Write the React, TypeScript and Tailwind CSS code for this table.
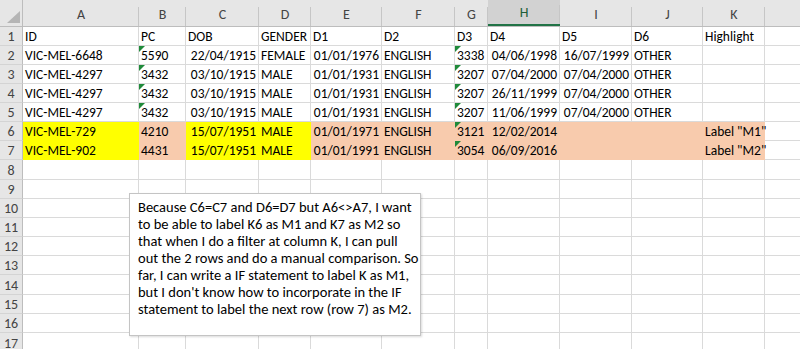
import React from 'react';

type Cell = { v?: string; right?: boolean; tri?: boolean; fill?: 'y' | 'p' };

const COLS = [
  { key: 'A', w: 'w-[116px]' },
  { key: 'B', w: 'w-[47px]' },
  { key: 'C', w: 'w-[73px]' },
  { key: 'D', w: 'w-[52px]' },
  { key: 'E', w: 'w-[71px]' },
  { key: 'F', w: 'w-[73px]' },
  { key: 'G', w: 'w-[33px]' },
  { key: 'H', w: 'w-[72px]' },
  { key: 'I', w: 'w-[72px]' },
  { key: 'J', w: 'w-[71px]' },
  { key: 'K', w: 'w-[62px]' },
  { key: 'L', w: 'w-[100px]' },
];

const t = (v: string, tri = false): Cell => ({ v, tri });
const d = (v: string): Cell => ({ v, right: true });

const ROWS: Cell[][] = [
  [t('ID'), t('PC'), t('DOB'), t('GENDER'), t('D1'), t('D2'), t('D3'), t('D4'), t('D5'), t('D6'), t('Highlight'), {}],
  [t('VIC-MEL-6648'), t('5590', true), d('22/04/1915'), t('FEMALE'), d('01/01/1976'), t('ENGLISH'), t('3338', true), d('04/06/1998'), d('16/07/1999'), t('OTHER'), {}, {}],
  [t('VIC-MEL-4297'), t('3432', true), d('03/10/1915'), t('MALE'), d('01/01/1931'), t('ENGLISH'), t('3207', true), d('07/04/2000'), d('07/04/2000'), t('OTHER'), {}, {}],
  [t('VIC-MEL-4297'), t('3432', true), d('03/10/1915'), t('MALE'), d('01/01/1931'), t('ENGLISH'), t('3207', true), d('26/11/1999'), d('07/04/2000'), t('OTHER'), {}, {}],
  [t('VIC-MEL-4297'), t('3432', true), d('03/10/1915'), t('MALE'), d('01/01/1931'), t('ENGLISH'), t('3207', true), d('11/06/1999'), d('07/04/2000'), t('OTHER'), {}, {}],
  [
    { v: 'VIC-MEL-729', fill: 'y' }, { v: '4210', fill: 'p' }, { v: '15/07/1951', right: true, fill: 'y' }, { v: 'MALE', fill: 'y' },
    { v: '01/01/1971', right: true, fill: 'p' }, { v: 'ENGLISH', fill: 'p' }, { v: '3121', tri: true, fill: 'p' },
    { v: '12/02/2014', right: true, fill: 'p' }, { fill: 'p' }, { fill: 'p' }, { v: 'Label "M1"', fill: 'p' }, {},
  ],
  [
    { v: 'VIC-MEL-902', fill: 'y' }, { v: '4431', fill: 'p' }, { v: '15/07/1951', right: true, fill: 'y' }, { v: 'MALE', fill: 'y' },
    { v: '01/01/1991', right: true, fill: 'p' }, { v: 'ENGLISH', fill: 'p' }, { v: '3054', tri: true, fill: 'p' },
    { v: '06/09/2016', right: true, fill: 'p' }, { fill: 'p' }, { fill: 'p' }, { v: 'Label "M2"', fill: 'p' }, {},
  ],
];

// row heights measured from the screenshot (rows 1..17)
const HEIGHTS = [19, 19, 19, 19, 19, 19, 19, 20, 19, 19, 19, 19, 19, 20, 19, 19, 20];

const NOTE = [
  'Because C6=C7 and D6=D7 but A6<>A7, I want',
  'to be able to label K6 as M1 and K7 as M2 so',
  'that when I do a filter at column K, I can pull',
  'out the 2 rows and do a manual comparison. So',
  'far, I can write a IF statement to label K as M1,',
  "but I don't know how to incorporate in the IF",
  'statement to label the next row (row 7) as M2.',
];

const fillClass = (c: Cell) => {
  if (c.fill === 'y') return 'bg-[#ffff00] border-[#ffff00]';
  if (c.fill === 'p') return 'bg-[#f8cbad] border-[#f8cbad]';
  return 'border-[#dadada]';
};

const GridCell = ({ cell, w }: { cell: Cell; w: string }) => (
  <div
    className={`relative flex shrink-0 items-end border-r border-b px-[2px] ${w} ${fillClass(cell)} ${
      cell.right ? 'justify-end' : 'justify-start'
    }`}
  >
    {cell.tri && (
      <svg className="absolute left-0 top-0" width="6" height="6" viewBox="0 0 6 6">
        <polygon points="0,0 6,0 0,6" fill="#1f8a3a" />
      </svg>
    )}
    {cell.v && <span className="relative z-10 whitespace-nowrap leading-[17px]">{cell.v}</span>}
  </div>
);

export default function App() {
  return (
    <div className="relative h-[349px] w-[800px] overflow-hidden bg-white font-['Calibri','Carlito','Lato','Liberation_Sans',sans-serif] text-[13.5px] text-black">
      {/* column headers */}
      <div className="flex h-[27px] border-b border-[#bdbdbd] bg-[#e6e6e6] text-[14px] text-[#444]">
        <div className="flex w-[23px] shrink-0 items-end justify-end border-r border-[#bdbdbd] pb-[2px] pr-[1px]">
          <svg width="15" height="14" viewBox="0 0 15 14">
            <polygon points="14,1 14,13 1,13" fill="#b5b5b5" />
          </svg>
        </div>
        {COLS.map((c) => (
          <div
            key={c.key}
            className={`relative flex shrink-0 items-end justify-center pb-[1px] ${c.w} after:absolute after:bottom-0 after:right-0 after:h-[19px] after:w-px after:bg-[#c6c6c6] ${
              c.key === 'H' ? 'border-b-2 border-[#217346] bg-[#d2d2d2] text-[#1d5e38]' : ''
            }`}
          >
            {c.key}
          </div>
        ))}
      </div>

      {/* rows */}
      {HEIGHTS.map((h, i) => {
        const cells = ROWS[i] ?? COLS.map(() => ({}));
        return (
          <div key={i} className={`flex ${h === 20 ? 'h-[20px]' : 'h-[19px]'}`}>
            <div className="flex w-[23px] shrink-0 items-end justify-center border-r border-b border-r-[#bdbdbd] border-b-[#d4d4d4] bg-[#e6e6e6] text-[14px] leading-[17px] text-[#444]">
              {i + 1}
            </div>
            {COLS.map((c, j) => (
              <GridCell key={c.key} cell={cells[j]} w={c.w} />
            ))}
          </div>
        );
      })}

      {/* floating text box */}
      <div className="absolute left-[129px] top-[193px] z-20 h-[143px] w-[292px] border border-[#c4c4c4] bg-white px-[8px] pt-[5px] text-[14.5px] leading-[17px] text-black shadow-[1px_1px_2px_rgba(0,0,0,0.15)]">
        {NOTE.map((line) => (
          <div key={line} className="whitespace-nowrap">
            {line}
          </div>
        ))}
      </div>
    </div>
  );
}
